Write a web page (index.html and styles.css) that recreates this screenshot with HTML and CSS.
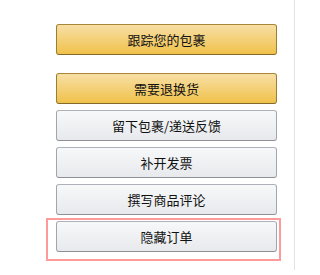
FILE: index.html
```html
<!DOCTYPE html>
<html lang="zh-CN">
<head>
<meta charset="utf-8">
<link rel="stylesheet" href="styles.css">
</head>
<body>
<div class="panel">
  <div class="actions">
    <button class="btn btn-primary btn-first">跟踪您的包裹</button>
    <button class="btn btn-primary">需要退换货</button>
    <button class="btn">留下包裹/递送反馈</button>
    <button class="btn">补开发票</button>
    <button class="btn">撰写商品评论</button>
    <div class="highlight">
      <button class="btn">隐藏订单</button>
    </div>
  </div>
</div>
</body>
</html>
```
FILE: styles.css
```css
html, body {
  margin: 0;
  padding: 0;
  background: #fff;
}
.panel {
  width: 295px;
  height: 270px;
  box-sizing: border-box;
  border-right: 1px solid #e3e3e3;
  padding-top: 24px;
  padding-left: 56px;
}
.actions {
  display: flex;
  flex-direction: column;
  gap: 6px;
  width: 221px;
}
.btn {
  display: block;
  width: 100%;
  height: 31px;
  margin: 0;
  padding: 0;
  box-sizing: border-box;
  border: 1px solid;
  border-color: #adb1b8 #a2a6ac #8d9096;
  border-radius: 3px;
  background: linear-gradient(to bottom, #f7f8fa, #e7e9ec);
  font-family: "Noto Sans CJK SC", "Noto Sans", sans-serif;
  font-size: 13px;
  color: #111;
  text-align: center;
  line-height: 29px;
}
.btn-primary {
  border-color: #a88734 #9c7e31 #846a29;
  background: linear-gradient(to bottom, #f7dfa5, #f0c14b);
}
.btn-first {
  margin-bottom: 12px;
}
.highlight {
  margin: -3px -4px 0 -10px;
  padding: 1px 2px 7px 8px;
  border: 2px solid #ff9a9a;
}
```
